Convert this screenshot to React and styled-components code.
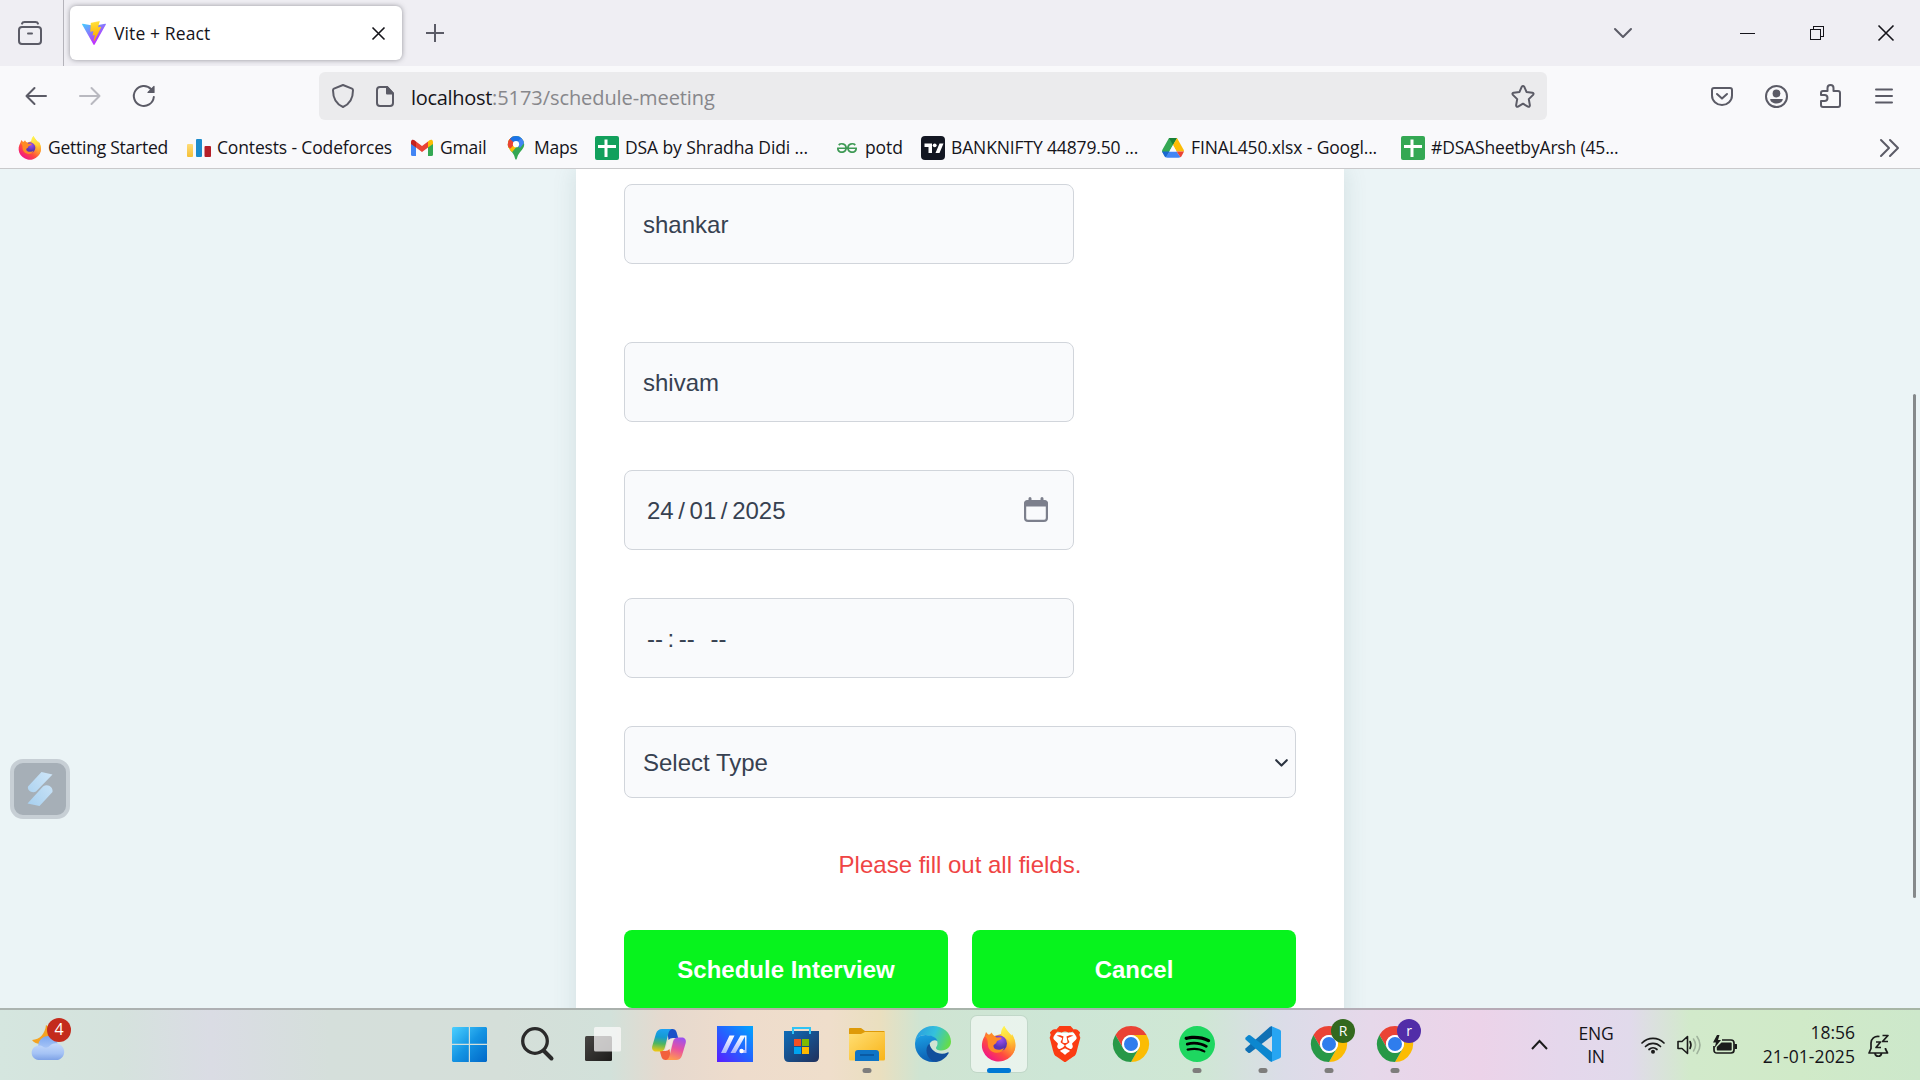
import React from "react";
import styled, { createGlobalStyle, css } from "styled-components";
import { SiBrave, SiGeeksforgeeks, SiSpotify } from "react-icons/si";

const ui = `"Open Sans", "Noto Sans", sans-serif`;
const page = `"Liberation Sans", Arial, sans-serif`;

const GlobalStyle = createGlobalStyle`
  * { box-sizing: border-box; }
  html, body { margin: 0; padding: 0; overflow: hidden; }
  body { font-family: ${ui}; color: #15141a; }
  svg { display: block; flex: none; overflow: visible; }
`;

const Screen = styled.div`
  width: 1920px;
  height: 1080px;
  display: flex;
  flex-direction: column;
  overflow: hidden;
  background: #ebf4f6;
`;

const Label = styled.span`
  white-space: pre;
  font-size: ${(p) => p.$size || 17.5}px;
  letter-spacing: ${(p) => p.$ls || 0}px;
  color: ${(p) => p.$color || "#15141a"};
`;

/* ---------- browser chrome ---------- */
const TabStrip = styled.header`
  height: 66px;
  flex: none;
  display: flex;
  align-items: stretch;
  background: #efeef3;
`;
const SidebarButton = styled.div`
  width: 64px;
  display: flex;
  align-items: center;
  padding-left: 18px;
  border-right: 1px solid #b4b3ba;
`;
const Tab = styled.div`
  width: 332px;
  height: 54px;
  margin: 6px 0 0 6px;
  padding: 0 17px 0 12px;
  display: flex;
  align-items: center;
  gap: 8px;
  border-radius: 6px;
  background: #fff;
  box-shadow: 0 0 5px rgba(60, 60, 70, 0.5);
`;
const Spacer = styled.div`
  flex: 1;
`;
const IconCell = styled.div`
  width: ${(p) => p.$w}px;
  flex: none;
  display: flex;
  align-items: center;
  justify-content: center;
`;

const NavBar = styled.nav`
  height: 60px;
  flex: none;
  display: flex;
  align-items: center;
  padding: 0 9px;
  background: #f9f9fb;
`;
const UrlBar = styled.div`
  width: 1228px;
  height: 48px;
  margin-left: 148px;
  padding: 0 12px 0 13px;
  display: flex;
  align-items: center;
  border-radius: 6px;
  background: #ebebed;
`;
const UrlText = styled.div`
  margin-left: -5px;
  padding-top: 2px;
  display: flex;
`;

const Bookmarks = styled.div`
  height: 43px;
  flex: none;
  display: flex;
  align-items: flex-start;
  padding: 4px 18px 0 18px;
  background: #f9f9fb;
  border-bottom: 1px solid #c9c9cb;
`;
const Bookmark = styled.div`
  width: ${(p) => p.$w}px;
  height: 36px;
  display: flex;
  align-items: center;
  gap: 6px;

  ${Label} {
    padding-bottom: 2px;
  }
`;

/* ---------- page ---------- */
const Viewport = styled.main`
  height: 839px;
  flex: none;
  display: flex;
  justify-content: center;
  position: relative;
  overflow: hidden;
  background: #ebf4f6;
`;
const Card = styled.form`
  width: 768px;
  height: 900px;
  padding: 15px 48px 0;
  display: flex;
  flex-direction: column;
  background: #fff;
  font-family: ${page};
  box-shadow: 0 0 22px rgba(60, 110, 110, 0.15);
`;
const fieldBox = css`
  border: 1px solid #d1d5db;
  border-radius: 8px;
  background: #f9fafc;
  color: #374151;
  font-family: ${page};
  font-size: 24px;
`;
const TextField = styled.input`
  ${fieldBox}
  width: 450px;
  height: 80px;
  flex: none;
  padding: 2px 18px 0;
  margin-bottom: ${(p) => p.$gap}px;
  outline: none;
`;
const PickerField = styled.div`
  ${fieldBox}
  width: 450px;
  height: 80px;
  flex: none;
  padding: 0 25px 0 22px;
  margin-bottom: 48px;
  display: flex;
  align-items: center;
  justify-content: space-between;

  svg {
    margin-bottom: 2px;
  }
`;
const Segments = styled.div`
  display: flex;
  gap: 4.6px;
  padding-top: 2px;
  white-space: pre;
`;
const Meridiem = styled.span`
  margin-left: 11px;
`;
const SelectField = styled.div`
  ${fieldBox}
  height: 72px;
  flex: none;
  padding: 2px 7px 0 18px;
  display: flex;
  align-items: center;
  justify-content: space-between;
`;
const ErrorText = styled.p`
  height: 36px;
  margin: 48px 0;
  line-height: 38px;
  text-align: center;
  font-size: 24px;
  color: #ef4444;
`;
const Actions = styled.div`
  display: grid;
  grid-template-columns: 1fr 1fr;
  gap: 24px;
`;
const ActionButton = styled.button`
  height: 78px;
  padding: 2px 0 0;
  border: 0;
  border-radius: 8px;
  background: #07f31d;
  color: #fff;
  font: bold 24px ${page};
`;
const ScrollThumb = styled.div`
  position: absolute;
  right: 4px;
  top: 225px;
  width: 3px;
  height: 504px;
  border-radius: 2px;
  background: #85898b;
`;
const Floating = styled.div`
  position: absolute;
  left: 10px;
  top: 590px;
  width: 60px;
  height: 60px;
  display: flex;
  align-items: center;
  justify-content: center;
  border: 4px solid #c7cfd5;
  border-radius: 13px;
  background: #a6afb7;
`;

/* ---------- taskbar ---------- */
const Taskbar = styled.footer`
  height: 72px;
  flex: none;
  display: flex;
  align-items: stretch;
  border-top: 2px solid rgba(120, 120, 120, 0.45);
  background: linear-gradient(
    90deg,
    #d5e6df 0,
    #d5e2dd 120px,
    #dadce4 210px,
    #d5dfdb 330px,
    #d5dfd9 500px,
    #d2e1da 610px,
    #e6d9ce 665px,
    #eedccc 740px,
    #efdecb 830px,
    #eadfbf 880px,
    #cfe4d2 920px,
    #cde6d6 1060px,
    #cfe7d4 1200px,
    #dbdce8 1285px,
    #e6d8ea 1370px,
    #ecd3e9 1480px,
    #e5d7ec 1560px,
    #e1daeb 1630px,
    #d2eacb 1690px,
    #d0eac8 1800px,
    #cde8cb 1920px
  );
  background-clip: border-box;
  background-origin: border-box;
`;
const Weather = styled.div`
  width: 435px;
  padding: 8px 0 0 29px;
`;
const AppSlot = styled.div`
  width: ${(p) => p.$w}px;
  display: flex;
  flex-direction: column;
  align-items: center;
  padding-top: 6px;
`;
const AppTile = styled.div`
  width: 56px;
  height: 56px;
  display: flex;
  align-items: center;
  justify-content: center;
  position: relative;
  border-radius: 6px;
  ${(p) =>
    p.$active &&
    css`
      background: rgba(255, 255, 255, 0.55);
      box-shadow: 0 0 0 1px rgba(150, 170, 160, 0.22);
    `}
`;
const RunMark = styled.i`
  position: absolute;
  left: 50%;
  bottom: -1px;
  width: ${(p) => (p.$active ? 24 : 9)}px;
  height: 5px;
  border-radius: 3px;
  transform: translateX(-50%);
  background: ${(p) => (p.$active ? "#0078d4" : "#7e7d7c")};
`;
const Badge = styled.span`
  position: absolute;
  left: ${(p) => p.$x}px;
  top: ${(p) => p.$y}px;
  width: 24px;
  height: 24px;
  line-height: 23px;
  border-radius: 50%;
  text-align: center;
  font-size: ${(p) => p.$size || 14}px;
  color: #fff;
  background: ${(p) => p.$bg};
`;
const WeatherTile = styled.div`
  width: 42px;
  height: 46px;
  padding: 7px 0 0 1.5px;
  position: relative;
`;
const Stack = styled.div`
  display: flex;
  flex-direction: column;
  align-items: ${(p) => p.$align};
  justify-content: center;
  width: ${(p) => p.$w}px;
  line-height: ${(p) => p.$lh}px;
  padding-bottom: ${(p) => p.$lift || 0}px;
`;

/* ---------- icons ---------- */
const Svg = ({ w, h = w, vb, children, ...rest }) => (
  <svg width={w} height={h} viewBox={vb || `0 0 ${w} ${h}`} fill="none" {...rest}>
    {children}
  </svg>
);
const line = { stroke: "#5b5b66", strokeWidth: 2, strokeLinecap: "round", strokeLinejoin: "round" };

const SidebarIcon = () => (
  <Svg w={24} {...line}>
    <path d="M4 2.6Q4.5 1 6.500 1h11Q19.500 1 20 2.600" />
    <rect x="1" y="6" width="22" height="17" rx="3" />
    <path d="M10 12.500h4" />
  </Svg>
);
const ViteIcon = () => (
  <Svg w={24} vb="0 0 256 257">
    <defs>
      <linearGradient id="va" x1="0" y1="0" x2=".57" y2=".82"><stop stopColor="#41d1ff" /><stop offset="1" stopColor="#bd34fe" /></linearGradient>
      <linearGradient id="vb" x1=".43" y1=".02" x2=".5" y2=".9"><stop stopColor="#ffea83" /><stop offset=".08" stopColor="#ffdd35" /><stop offset="1" stopColor="#ffa800" /></linearGradient>
    </defs>
    <path fill="url(#va)" d="M255.153 37.938L134.897 252.976c-2.483 4.440-8.862 4.466-11.382.048L.875 37.958c-2.746-4.814 1.371-10.646 6.827-9.670l120.385 21.517a6.537 6.537 0 0 0 2.322-.004l117.867-21.483c5.438-.991 9.574 4.796 6.877 9.620Z" />
    <path fill="url(#vb)" d="M185.432.063L96.440 17.501a3.268 3.268 0 0 0-2.634 3.014l-5.474 92.456a3.268 3.268 0 0 0 3.997 3.378l24.777-5.718c2.318-.535 4.413 1.507 3.936 3.838l-7.361 36.047c-.495 2.426 1.782 4.500 4.151 3.780l15.304-4.649c2.372-.720 4.652 1.360 4.150 3.788l-11.698 56.621c-.732 3.542 3.979 5.473 5.943 2.437l1.313-2.028l72.516-144.720c1.215-2.423-.880-5.186-3.540-4.672l-25.505 4.922c-2.396.462-4.435-1.770-3.759-4.114l16.646-57.705c.677-2.350-1.370-4.583-3.769-4.113Z" />
  </Svg>
);
const Cross = ({ s, color = "#15141a", sw = 1.6 }) => (
  <Svg w={s} stroke={color} strokeWidth={sw}>
    <path d={`M.5.5 ${s - 0.5} ${s - 0.5}M${s - 0.5}.5.5 ${s - 0.5}`} />
  </Svg>
);
const Plus = () => (<Svg w={18} stroke="#5b5b66" strokeWidth="2"><path d="M9 0v18M0 9h18" /></Svg>);
const Chevron = () => (<Svg w={18} h={10} {...line}><path d="m1 1 8 8 8-8" /></Svg>);
const Minimise = () => (<Svg w={15} h={1}><path fill="#15141a" d="M0 0h15v1H0z" /></Svg>);
const Restore = () => (
  <Svg w={14} stroke="#15141a" shapeRendering="crispEdges"><path d="M.5 3.500h10v10H.5zM3.500 3.500v-3h10v10h-3" /></Svg>
);
const Arrow = ({ flip }) => (
  <Svg w={22} h={18} {...line} stroke={flip ? "#b9b9c0" : "#5b5b66"}>
    <path d={flip ? "M20.500 9H1M12.500 1l8 8-8 8" : "M1.500 9H21M9.500 1 1.500 9l8 8"} />
  </Svg>
);
const Reload = () => (
  <Svg w={22} h={22} {...line}>
    <path d="M18.200 4.200A10 10 0 1 0 20.800 12" />
    <path d="M21 1.500v6h-6z" fill="#5b5b66" strokeWidth="1.200" />
  </Svg>
);
const Shield = () => (
  <Svg w={22} h={24} {...line}><path d="M11 1 2 4.700Q1 5.200 1 6.300C1 14 4 20 11 23 18 20 21 14 21 6.300Q21 5.200 20 4.700Z" /></Svg>
);
const Doc = () => (
  <Svg w={18} h={21} {...line}>
    <path d="M11 1H4Q1 1 1 4v13q0 3 3 3h10q3 0 3-3V7.500z" />
    <path d="M11 1v6.500h6z" fill="#5b5b66" />
  </Svg>
);
const Star = () => (
  <Svg w={24} h={23} {...line}>
    <path d="M10.800 1.700q1.200-1.400 2.400 0l2.300 5.200 5.900.8q1.900.5.700 2.200l-4.300 4.200 1.100 6.200q-.1 1.900-2 1.300L12 18.700l-4.900 2.900q-1.900.6-2-1.300l1.100-6.200-4.300-4.200Q.7 8.200 2.600 7.700l5.900-.8z" />
  </Svg>
);
const Pocket = () => (
  <Svg w={22} h={19} {...line}>
    <path d="M3 1h16q2 0 2 2v5.500a10 9.500 0 0 1-20 0V3q0-2 2-2z" /><path d="m6 7 5 4.600L16 7" />
  </Svg>
);
const Account = () => (
  <Svg w={23} {...line}>
    <circle cx="11.500" cy="11.500" r="10.500" />
    <g fill="#5b5b66" stroke="none"><circle cx="11.500" cy="8.500" r="3.900" /><path d="M5.200 14h12.600c0 2.800-3 4.500-6.300 4.500S5.200 16.800 5.200 14z" /></g>
  </Svg>
);
const Puzzle = () => (
  <Svg w={21} h={24} {...line}>
    <path d="M7.500 7V4a3 3 0 0 1 6 0v3H18q2 0 2 2v12q0 2-2 2H3q-2 0-2-2v-4h3.500a3 3 0 0 0 0-6H1V9q0-2 2-2z" />
  </Svg>
);
const Menu = () => (<Svg w={18} h={16} {...line}><path d="M1 1.500h16M1 8h16M1 14.500h16" /></Svg>);
const Overflow = () => (<Svg w={19} h={18} {...line}><path d="m1 1 8 8-8 8M10 1l8 8-8 8" /></Svg>);

const Firefox = ({ s, id }) => (
  <Svg w={s} vb="0 0 36 36">
    <defs>
      <linearGradient id={id} x1=".85" y1=".1" x2=".2" y2=".95"><stop stopColor="#fff44f" /><stop offset=".35" stopColor="#ffa52e" /><stop offset=".65" stopColor="#ff4b3f" /><stop offset="1" stopColor="#f0128c" /></linearGradient>
      <radialGradient id={id + "p"} cx=".6" cy=".25"><stop stopColor="#a050f0" /><stop offset="1" stopColor="#5b35b5" /></radialGradient>
      <linearGradient id={id + "y"} x1=".4" y1="0" x2=".6" y2="1"><stop stopColor="#fff44f" /><stop offset=".5" stopColor="#ffcf36" /><stop offset="1" stopColor="#ff7a2e" /></linearGradient>
    </defs>
    <path fill={`url(#${id})`} d="M3.500 10.500 5 6l3 3.500 2.500-3L13 10l7-2 3-8 5 7 4 3.500c4 8 2.500 15-2.200 20A17 17 0 0 1 2 25C0 20 1 14.500 3.500 10.500z" />
    <path fill={`url(#${id}y)`} d="M23.500 0c.3 4 5 6 7 10.500L31 8c5 8 4.500 16-.5 21.500C33 20 28 13 21 10.500 19 6 21 2 23.500 0z" />
    <circle cx="18" cy="17.500" r="8" fill={`url(#${id}p)`} />
    <path fill="#ff8a25" d="M4 10c5-3 9-1 11.500 1.500h5c.5 1.500-3 3-4.500 3.500-1 4-4 3-3.500 5.500C13 24 19 25 23 22c-2 7-13 6-15.500-.5C6 17 8 14 4 10z" />
  </Svg>
);
const Codeforces = () => (
  <Svg w={24}>
    <defs>
      <linearGradient id="cy" x1="0" y1="0" x2="0" y2="1"><stop stopColor="#ffdc78" /><stop offset="1" stopColor="#f5c036" /></linearGradient>
    </defs>
    <rect y="8" width="6" height="13" rx="1" fill="url(#cy)" /><rect x="9" y="3" width="6" height="18" rx="1" fill="#1c8ccc" /><rect x="17.500" y="10" width="6.500" height="11" rx="1" fill="#b51f28" />
  </Svg>
);
const Gmail = () => (
  <Svg w={24}>
    <path fill="#4285f4" d="M1 6l5 3.500V20H2.500Q1 20 1 18.500z" /><path fill="#34a853" d="M18 9.500 23 6v12.500q0 1.500-1.500 1.500H18z" />
    <path fill="#ea4335" d="M6 5.500 12 10l6-4.500v6L12 16l-6-4.500z" /><path fill="#c5221f" d="M1 6c0-2.600 2.500-2.600 3.500-1.700L6 5.500v6L1 8z" /><path fill="#fbbc04" d="M23 6c0-2.600-2.500-2.600-3.500-1.700L18 5.500v6L23 8z" />
  </Svg>
);
const Maps = () => (
  <Svg w={24}>
    <clipPath id="mp"><path d="M12 0a8.200 8.200 0 0 1 8.200 8.200c0 4.800-3.800 6.300-6.200 11-.9 2-1 4.500-2 4.500s-1.100-2.500-2-4.500c-2.400-4.700-6.200-6.200-6.200-11A8.200 8.200 0 0 1 12 0z" /></clipPath>
    <g clipPath="url(#mp)">
      <path fill="#34a853" d="M0 0h24v24H0z" /><path fill="#fbbc04" d="M0 10 5 15 17.500 0H0z" transform="translate(1.500 3)" /><path fill="#ea4335" d="M0 0h8l4 8.500-5.500 6L0 11z" transform="translate(0 -2)" /><path fill="#1a73e8" d="M5 2 12 8.500 20 0H5z" /><path fill="#4285f4" d="m12 8.500 5-6.500 3-1 1 5-5 6z" />
    </g>
    <circle cx="12" cy="8.200" r="3.100" fill="#fff" />
  </Svg>
);
const Sheet = ({ color }) => (
  <Svg w={24}>
    <rect width="24" height="24" rx="2" fill={color} /><path fill="#fff" d="M9.500 3.500h3V9H21v3h-8.500v9h-3v-9H3V9h6.500z" />
  </Svg>
);
const TradingView = () => (
  <Svg w={24}>
    <rect width="24" height="24" rx="4" fill="#131722" /><path fill="#fff" d="M3.500 7.500H11V17H7.500v-6h-4zM18.500 7.500h4L18.500 17h-4z" /><circle cx="13.700" cy="9.300" r="1.900" fill="#fff" />
  </Svg>
);
const Drive = () => (
  <Svg w={24}>
    <path fill="#34a853" d="M8 2h8l-4 7-7 12.500L1 15.500Q1 14.500 1.500 13.500z" /><path fill="#188038" d="M8 2h8l-4 7z" /><path fill="#fbbc04" d="M16 2l6.500 11.500q.5 1 .5 2h-7.500L12 9z" /><path fill="#4285f4" d="M8.500 15.500h7L19.500 21q-.8.800-2 .8h-11q-1.200 0-2-.8z" /><path fill="#1967d2" d="M1 15.500h7.500L4.500 21.300q-.7-.5-1-1z" /><path fill="#ea4335" d="M23 15.500h-7.500l4 5.800q.7-.5 1-1z" />
    <path fill="#f9f9fb" d="m12 9.300 3.600 6.200H8.400z" />
  </Svg>
);

const Calendar = () => (
  <Svg w={24} h={25}>
    <rect x="1.100" y="4.500" width="21.800" height="19.400" rx="3" stroke="#7c7f8c" strokeWidth="2.200" />
    <path fill="#7c7f8c" d="M0 6.500Q0 3 3.500 3h17Q24 3 24 6.500V9.500H0zM4.500 1.500Q4.500 0 6 0t1.500 1.500V5h-3zM16.500 1.500Q16.500 0 18 0t1.500 1.500V5h-3z" />
  </Svg>
);
const SelectCaret = () => (<Svg w={13} h={8} stroke="#2b3340" strokeWidth="2.100" strokeLinecap="round" strokeLinejoin="round"><path d="M1.200 1.200 6.500 6.600l5.300-5.400" /></Svg>);
const SwiftMark = () => (
  <Svg w={28} h={34}>
    <defs><linearGradient id="sw" x1="0" y1="1" x2="1" y2="0"><stop stopColor="#a6cfef" /><stop offset="1" stopColor="#cfe6f8" /></linearGradient></defs>
    <path fill="url(#sw)" d="M15.500 0 26.500 2.500 10 19.500C6 21.500 1 18.500 2 14.500zM13.500 34 1.500 31.500 17 14.500C21.500 11 27.500 15 26.500 20z" />
  </Svg>
);

const WinLogo = () => (
  <Svg w={35}>
    <defs><linearGradient id="wl" gradientUnits="userSpaceOnUse" x1="0" y1="0" x2="35" y2="35"><stop stopColor="#4cd0ff" /><stop offset=".5" stopColor="#1494e3" /><stop offset="1" stopColor="#0067c8" /></linearGradient></defs>
    <path fill="url(#wl)" d="M1 0h15.800v16.800H0V1zM18 0h16l1 1v15.800H18zM0 18h16.800v17H1l-1-1zM18 18h17v16l-1 1H18z" />
  </Svg>
);
const SearchIcon = () => (
  <Svg w={33} h={34} stroke="#2a2a2a"><circle cx="14" cy="14" r="12.300" strokeWidth="3.300" /><path d="m23 24 7.500 7.500" strokeWidth="4" strokeLinecap="round" /></Svg>
);
const TaskView = () => (
  <Svg w={36} h={34}>
    <defs><linearGradient id="tv" x1="0" y1="0" x2="1" y2="1"><stop stopColor="#474543" /><stop offset="1" stopColor="#1d1c1b" /></linearGradient></defs>
    <rect y="9" width="27" height="25" rx="1.500" fill="url(#tv)" /><rect x="9" width="27" height="24.500" rx="1.500" fill="#fbfafa" fillOpacity=".75" />
  </Svg>
);
const Copilot = () => (
  <Svg w={34} h={31}>
    <defs>
      <linearGradient id="c1" x1=".4" y1="0" x2=".3" y2="1"><stop stopColor="#1ea0f2" /><stop offset=".35" stopColor="#149bd0" /><stop offset=".65" stopColor="#4fb560" /><stop offset="1" stopColor="#f2c811" /></linearGradient>
      <linearGradient id="c2" x1=".7" y1="0" x2=".4" y2="1"><stop stopColor="#9b50f0" /><stop offset=".5" stopColor="#e850a0" /><stop offset="1" stopColor="#ff9a50" /></linearGradient>
    </defs>
    <path fill="#f3e6e0" d="M17 8h5l-4.500 15h-5z" />
    <path fill="#1a50c8" d="M15 0h5.500q3 0 4 3l1.700 6H21q-3 0-4.500 2z" /><path fill="#f2603c" d="M19 31h-5.500q-3 0-4-3L7.800 22H13q3 0 4.500-2z" />
    <path fill="url(#c1)" d="M10 0h10q-2.500.5-3.500 4L13 18q-1 4.500-5 4.500H4C1 22.500-.5 20 .3 17L4 4.500Q5.500 0 10 0z" />
    <path fill="url(#c2)" d="M24 31H14q2.500-.5 3.500-4L21 13q1-4.500 5-4.500h4c3 0 4.500 2.500 3.700 5.500L30 26.500Q28.500 31 24 31z" />
  </Svg>
);
const MyAsus = () => (
  <Svg w={36}>
    <defs>
      <linearGradient id="ma" x1="0" y1="1" x2="1" y2="0"><stop stopColor="#5a1cff" /><stop offset=".5" stopColor="#2462ff" /><stop offset="1" stopColor="#00a5ff" /></linearGradient>
      <linearGradient id="mb" x1="0" y1="1" x2="0" y2="0"><stop stopColor="#a8b4ff" /><stop offset="1" stopColor="#fff" /></linearGradient>
    </defs>
    <path fill="url(#ma)" d="M0 0h36v36H0z" /><path fill="url(#mb)" d="M12.500 9.500h5L9 27H4zM23.500 9.500h5L18.500 27h-5zM28 9.500h1.500V27h-6l1-3H28z" /><circle cx="24.500" cy="25" r="2.200" fill="#fff" />
  </Svg>
);
const Store = () => (
  <Svg w={35}>
    <defs><linearGradient id="st" x1="0" y1="0" x2="1" y2="1"><stop stopColor="#0f6cb8" /><stop offset="1" stopColor="#20305c" /></linearGradient></defs>
    <path fill="url(#st)" d="M0 4h35v26q0 5-5 5H5q-5 0-5-5z" /><path stroke="#2fc3f5" strokeWidth="2" d="M9 7V1h17v6" />
    <path fill="#f25022" d="M10 12h7v7h-7z" /><path fill="#7fba00" d="M18 12h7v7h-7z" /><path fill="#00a4ef" d="M10 20h7v7h-7z" /><path fill="#ffb900" d="M18 20h7v7h-7z" />
  </Svg>
);
const Explorer = () => (
  <Svg w={36} h={33}>
    <defs><linearGradient id="ex" x1="0" y1="0" x2="1" y2="1"><stop stopColor="#ffdf75" /><stop offset="1" stopColor="#f9b418" /></linearGradient></defs>
    <path fill="#de9a08" d="M0 1q0-1 1-1h11l4 3h19l1 1v3H0z" /><path fill="url(#ex)" d="M0 6h12l4-2h20v27q0 1.500-1.500 1.500h-33Q0 32.500 0 31z" /><path fill="#0f74c5" d="M6 33v-8q0-3 3-3h18q3 0 3 3v8z" /><path fill="#0a4f94" d="M11 26.300h14v1.400H11z" />
  </Svg>
);
const Edge = () => (
  <Svg w={36}>
    <defs>
      <linearGradient id="e1" x1="0" y1=".3" x2="1" y2=".6"><stop stopColor="#2a9de0" /><stop offset=".5" stopColor="#34c1dc" /><stop offset="1" stopColor="#66dd45" /></linearGradient>
      <linearGradient id="e2" x1=".3" y1="0" x2=".5" y2="1"><stop stopColor="#1b9de2" /><stop offset="1" stopColor="#0b5cb0" /></linearGradient>
    </defs>
    <path fill="url(#e1)" d="M0 16C1 7 8 0 18 0s18 7 18 15.500c0 5.500-4.500 9-9.500 9-4 0-5.500-1.500-5.500-2.500 0-1.200 1.500-1.500 1.500-5C22.500 13 17 9 10 9 5 9 1.500 12 0 16z" />
    <path fill="url(#e2)" d="M0 18C0 12 5 9 10.500 9 17 9 22 12 22.400 15c-2-1.500-5-1-7 1.500-5 6 1 17 7.500 18.800C20.500 36 18 36 18 36 8 36 0 28 0 18z" />
    <path fill="#124f9c" d="M14.500 17.500C9 22 11 33 20 35.900c6 0 11-4 13.500-8.400.5-1-.2-1.500-1-1-4 2-10 1.500-13.500-1.500-2.500-2-4-4.500-4.500-7.500z" />
  </Svg>
);
const Brave = () => (
  <Svg w={30} h={36}>
    <path fill="#fff" d="M5 7h20l2 8-7 15-5 3-5-3-7-15z" />
    <SiBrave x={-3} y={0} width={36} height={36} size={36} color="#fb3c13" />
  </Svg>
);
const Chrome = () => (
  <Svg w={36}>
    <path fill="#ea4335" d="M2.400 9a18 18 0 0 1 31.200 0H18a9 9 0 0 0-7.800 13.500z" /><path fill="#fbbc04" d="M33.600 9A18 18 0 0 1 18 36l7.800-13.500A9 9 0 0 0 18 9z" /><path fill="#279847" d="M18 36A18 18 0 0 1 2.400 9l7.800 13.500A9 9 0 0 0 25.800 22.500z" />
    <circle cx="18" cy="18" r="9" fill="#fff" /><circle cx="18" cy="18" r="7" fill="#2f7ded" />
  </Svg>
);
const Spotify = () => (
  <Svg w={36}><circle cx="18" cy="18" r="17" fill="#000" /><SiSpotify width={36} height={36} size={36} color="#1ed760" /></Svg>
);
const VsCode = () => (
  <Svg w={36}>
    <path fill="#0f70b4" d="M27 0v10L5.200 26.800q-1 .6-2 0L.7 24.500q-1-1.200 0-2.200L25 .8z" /><path fill="#0c87cf" d="M27 36V26L5.200 9.200q-1-.6-2 0L.7 11.500q-1 1.200 0 2.200L25 35.200z" /><path fill="#27a5f2" d="M26 0l8.800 3.700Q36 4.300 36 5.500v25q0 1.200-1.200 1.800L26 36q1 0 1-1.500v-33Q27 0 26 0z" />
  </Svg>
);
const WeatherIcon = () => (
  <Svg w={38} h={38}>
    <defs><linearGradient id="wc" x1="0" y1="0" x2="0" y2="1"><stop stopColor="#c5d9fb" /><stop offset=".6" stopColor="#a5c3f5" /><stop offset="1" stopColor="#7ea2e6" /></linearGradient><linearGradient id="wd" x1="0" y1="0" x2="0" y2="1"><stop stopColor="#7ba6f0" /><stop offset="1" stopColor="#c4d8fa" /></linearGradient></defs>
    <path fill="#f4a321" d="M15 0c9 5 7 18-3 19-5 .5-9-1-11-4 8-.5 13-6 14-15z" />
    <circle cx="17" cy="21" r="10" fill="url(#wd)" />
    <path fill="url(#wc)" d="M7.500 35a7.300 7.300 0 1 1 5-13c2 1 4 1 6-1A8.500 8.500 0 1 1 27 35z" />
  </Svg>
);
const CaretUp = () => (<Svg w={17} h={10} stroke="#1b1b1b" strokeWidth="2"><path d="m1 9 7.500-8L16 9" /></Svg>);
const Wifi = () => (
  <Svg w={24} h={18} stroke="#1b1b1b" strokeWidth="1.700" strokeLinecap="round">
    <path d="M1 7a15.500 15.500 0 0 1 22 0M4.500 10.500a10.600 10.600 0 0 1 15 0M8 13.500a6 6 0 0 1 8 0" /><circle cx="12" cy="15.800" r="2" fill="#1b1b1b" stroke="none" />
  </Svg>
);
const Speaker = () => (
  <Svg w={25} h={20} stroke="#1b1b1b" strokeWidth="1.600" strokeLinecap="round" strokeLinejoin="round">
    <path d="M1 6.500h4L10.500 1.500v17L5 13.500H1z" /><path d="M13 6.500q2 3.500 0 7" /><path stroke="#9fb29c" d="M16.500 4q4 6 0 12M20 1.500q6 8.500 0 17" />
  </Svg>
);
const Battery = () => (
  <Svg w={24} h={20}>
    <path stroke="#1b1b1b" strokeWidth="1.700" d="M9 5h9q3 0 3 3v7q0 3-3 3H4q-3 0-3-3v-4" /><path fill="#1b1b1b" d="M8.500 7.500H18q.7 0 .7.700v6.600q0 .700-.7.700H4.500q-.7 0-.7-.7V12zM21.500 9h2q.5 0 .5.500v4q0 .5-.5.500h-2zM4 0 0 7.500h3L1.500 13 8 5H5l1.500-5z" />
  </Svg>
);
const Bell = () => (
  <Svg w={21} h={23} stroke="#1b1b1b" strokeWidth="1.700" strokeLinejoin="round">
    <path d="M11.500 2.500C6.500 1.500 3 5 3 9v5.500L1 19h18.500L17.500 15v-1M7 19.500a3.300 3.300 0 0 0 6.500 0" /><path d="M8 8h4.500L8 13.500h5M14.500 1.500H20l-5.500 6H20" />
  </Svg>
);

const bookmarks = [
  { icon: <Firefox s={24} id="ffs" />, label: "Getting Started", w: 169, ls: -0.25 },
  { icon: <Codeforces />, label: "Contests - Codeforces", w: 223, ls: -0.15 },
  { icon: <Gmail />, label: "Gmail", w: 94, ls: -0.2 },
  { icon: <Maps />, label: "Maps", w: 91, ls: -0.2 },
  { icon: <Sheet color="#12a05c" />, label: "DSA by Shradha Didi ...", w: 240, ls: -0.1 },
  { icon: <SiGeeksforgeeks size={20} color="#3f9a55" />, label: "potd", w: 86, ls: -0.1 },
  { icon: <TradingView />, label: "BANKNIFTY 44879.50 ...", w: 240, ls: -0.14 },
  { icon: <Drive />, label: "FINAL450.xlsx - Googl...", w: 240, ls: -0.13 },
  { icon: <Sheet color="#34a853" />, label: "#DSASheetbyArsh (45...", w: 240, ls: -0.17 },
];

const apps = [
  { icon: <WinLogo />, w: 69 },
  { icon: <SearchIcon /> },
  { icon: <TaskView /> },
  { icon: <Copilot /> },
  { icon: <MyAsus /> },
  { icon: <Store /> },
  { icon: <Explorer />, running: true },
  { icon: <Edge /> },
  { icon: <Firefox s={36} id="ffl" />, running: true, active: true },
  { icon: <Brave /> },
  { icon: <Chrome /> },
  { icon: <Spotify />, running: true },
  { icon: <VsCode />, running: true },
  { icon: <Chrome />, running: true, badge: "R", color: "#33691e" },
  { icon: <Chrome />, running: true, badge: "r", color: "#512da8" },
];

export default function App() {
  return (
    <Screen>
      <GlobalStyle />
      <TabStrip>
        <SidebarButton><SidebarIcon /></SidebarButton>
        <Tab>
          <ViteIcon />
          <Label $ls={0.12}>Vite + React</Label>
          <Spacer />
          <Cross s={13} />
        </Tab>
        <IconCell $w={65}><Plus /></IconCell>
        <Spacer />
        <IconCell $w={60}><Chevron /></IconCell>
        <IconCell $w={60} />
        <IconCell $w={69}><Minimise /></IconCell>
        <IconCell $w={69}><Restore /></IconCell>
        <IconCell $w={69}><Cross s={16} /></IconCell>
      </TabStrip>

      <NavBar>
        <IconCell $w={54}><Arrow /></IconCell>
        <IconCell $w={54}><Arrow flip /></IconCell>
        <IconCell $w={54}><Reload /></IconCell>
        <UrlBar>
          <Shield />
          <IconCell $w={62}><Doc /></IconCell>
          <UrlText>
            <Label $size={20} $ls={-0.3}>localhost</Label>
            <Label $size={20} $ls={-0.08} $color="#87878b">:5173/schedule-meeting</Label>
          </UrlText>
          <Spacer />
          <Star />
        </UrlBar>
        <Spacer />
        <IconCell $w={54}><Pocket /></IconCell>
        <IconCell $w={54}><Account /></IconCell>
        <IconCell $w={54}><Puzzle /></IconCell>
        <IconCell $w={54}><Menu /></IconCell>
      </NavBar>

      <Bookmarks>
        {bookmarks.map((b) => (
          <Bookmark key={b.label} $w={b.w}>
            <IconCell $w={24}>{b.icon}</IconCell>
            <Label $ls={b.ls}>{b.label}</Label>
          </Bookmark>
        ))}
        <Spacer />
        <Bookmark $w={22}><Overflow /></Bookmark>
      </Bookmarks>

      <Viewport>
        <Card>
          <TextField $gap={78} defaultValue="shankar" />
          <TextField $gap={48} defaultValue="shivam" />
          <PickerField>
            <Segments>
              <span>24</span><span>/</span><span>01</span><span>/</span><span>2025</span>
            </Segments>
            <Calendar />
          </PickerField>
          <PickerField>
            <Segments>
              <span>--</span><span>:</span><span>--</span><Meridiem>--</Meridiem>
            </Segments>
          </PickerField>
          <SelectField>
            <span>Select Type</span>
            <SelectCaret />
          </SelectField>
          <ErrorText>Please fill out all fields.</ErrorText>
          <Actions>
            <ActionButton type="button">Schedule Interview</ActionButton>
            <ActionButton type="button">Cancel</ActionButton>
          </Actions>
        </Card>
        <Floating><SwiftMark /></Floating>
        <ScrollThumb />
      </Viewport>

      <Taskbar>
        <Weather>
          <WeatherTile>
            <WeatherIcon />
            <Badge $x={18} $y={0} $size={16} $bg="#c42b1c">4</Badge>
          </WeatherTile>
        </Weather>
        {apps.map((a, i) => (
          <AppSlot key={i} $w={a.w || 66}>
            <AppTile $active={a.active}>
              {a.icon}
              {a.badge && <Badge $x={30} $y={3} $bg={a.color}>{a.badge}</Badge>}
              {a.running && <RunMark $active={a.active} />}
            </AppTile>
          </AppSlot>
        ))}
        <Spacer />
        <IconCell $w={60}><CaretUp /></IconCell>
        <Stack $w={54} $align="center" $lh={23}>
          <Label $ls={-0.2}>ENG</Label>
          <Label $ls={-0.2}>IN</Label>
        </Stack>
        <IconCell $w={60}><Wifi /></IconCell>
        <IconCell $w={12}><Speaker /></IconCell>
        <IconCell $w={60}><Battery /></IconCell>
        <Stack $w={100} $align="flex-end" $lh={24} $lift={2}>
          <Label $ls={0}>18:56</Label>
          <Label $ls={0.1}>21-01-2025</Label>
        </Stack>
        <IconCell $w={47}><Bell /></IconCell>
        <IconCell $w={18} />
      </Taskbar>
    </Screen>
  );
}
